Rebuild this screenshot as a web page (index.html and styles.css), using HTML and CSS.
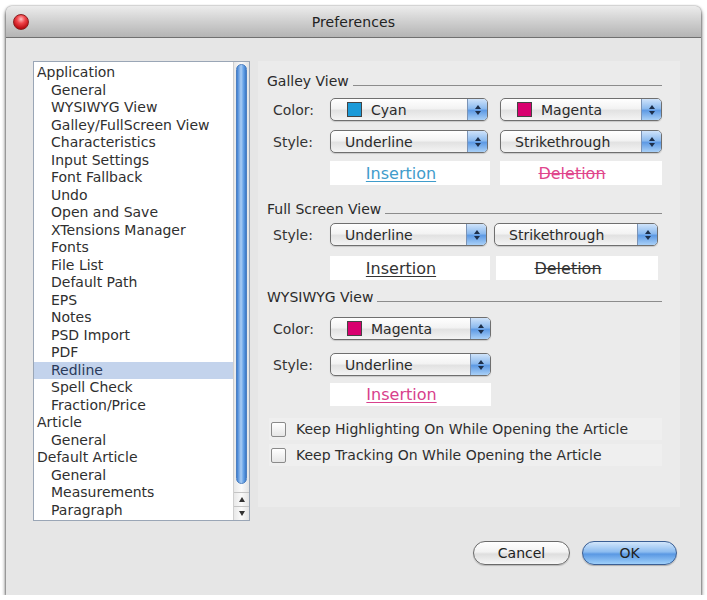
FILE: index.html
```html
<!DOCTYPE html>
<html>
<head>
<meta charset="utf-8">
<title>Preferences</title>
<link rel="stylesheet" href="styles.css">
</head>
<body>
<div class="window">
  <div class="titlebar">
    <span class="close"></span>
    <span class="title">Preferences</span>
  </div>
  <div class="content">
    <div class="listbox">
      <div class="list">
        <div class="item top">Application</div>
        <div class="item">General</div>
        <div class="item">WYSIWYG View</div>
        <div class="item">Galley/FullScreen View</div>
        <div class="item">Characteristics</div>
        <div class="item">Input Settings</div>
        <div class="item">Font Fallback</div>
        <div class="item">Undo</div>
        <div class="item">Open and Save</div>
        <div class="item">XTensions Manager</div>
        <div class="item">Fonts</div>
        <div class="item">File List</div>
        <div class="item">Default Path</div>
        <div class="item">EPS</div>
        <div class="item">Notes</div>
        <div class="item">PSD Import</div>
        <div class="item">PDF</div>
        <div class="item selected">Redline</div>
        <div class="item">Spell Check</div>
        <div class="item">Fraction/Price</div>
        <div class="item top">Article</div>
        <div class="item">General</div>
        <div class="item top">Default Article</div>
        <div class="item">General</div>
        <div class="item">Measurements</div>
        <div class="item">Paragraph</div>
      </div>
      <div class="scrollbar">
        <div class="track"><div class="thumb"></div></div>
        <div class="arrow up"><span></span></div>
        <div class="arrow down"><span></span></div>
      </div>
    </div>
    <div class="panel">
      <div class="section-head"><span>Galley View</span><span class="rule"></span></div>
      <div class="row r-first">
        <span class="label">Color:</span>
        <div class="popup w158"><span class="swatch cyan"></span><span class="ptext">Cyan</span><span class="stepper"><i class="up"></i><i class="dn"></i></span></div>
        <div class="popup w162 ml12"><span class="swatch magenta"></span><span class="ptext">Magenta</span><span class="stepper"><i class="up"></i><i class="dn"></i></span></div>
      </div>
      <div class="row r-second">
        <span class="label">Style:</span>
        <div class="popup w158"><span class="ptext">Underline</span><span class="stepper"><i class="up"></i><i class="dn"></i></span></div>
        <div class="popup w162 ml12"><span class="ptext">Strikethrough</span><span class="stepper"><i class="up"></i><i class="dn"></i></span></div>
      </div>
      <div class="row r-preview">
        <span class="label"></span>
        <div class="preview w160"><span class="ins cyan-t">Insertion</span></div>
        <div class="preview w162 ml10"><span class="del magenta-t">Deletion</span></div>
      </div>

      <div class="section-head sh2"><span>Full Screen View</span><span class="rule"></span></div>
      <div class="row r-fs">
        <span class="label">Style:</span>
        <div class="popup w157"><span class="ptext">Underline</span><span class="stepper"><i class="up"></i><i class="dn"></i></span></div>
        <div class="popup w164 ml7"><span class="ptext">Strikethrough</span><span class="stepper"><i class="up"></i><i class="dn"></i></span></div>
      </div>
      <div class="row r-fsprev">
        <span class="label"></span>
        <div class="preview w160"><span class="ins">Insertion</span></div>
        <div class="preview w162 ml6"><span class="del">Deletion</span></div>
      </div>

      <div class="section-head sh3"><span>WYSIWYG View</span><span class="rule"></span></div>
      <div class="row r-wc">
        <span class="label">Color:</span>
        <div class="popup w161"><span class="swatch magenta"></span><span class="ptext">Magenta</span><span class="stepper"><i class="up"></i><i class="dn"></i></span></div>
      </div>
      <div class="row r-ws">
        <span class="label">Style:</span>
        <div class="popup w161"><span class="ptext">Underline</span><span class="stepper"><i class="up"></i><i class="dn"></i></span></div>
      </div>
      <div class="row r-wprev">
        <span class="label"></span>
        <div class="preview w161 h23"><span class="ins pink-t">Insertion</span></div>
      </div>

      <div class="check c1"><span class="box"></span><span>Keep Highlighting On While Opening the Article</span></div>
      <div class="check c2"><span class="box"></span><span>Keep Tracking On While Opening the Article</span></div>
    </div>
  </div>
  <div class="buttons">
    <div class="btn cancel">Cancel</div>
    <div class="btn ok">OK</div>
  </div>
</div>
</body>
</html>
```

FILE: styles.css
```css
html, body {
  margin: 0;
  padding: 0;
  background: #ffffff;
}
body {
  font-family: "DejaVu Sans", "Liberation Sans", sans-serif;
  font-size: 14px;
  color: #2e2e2e;
}
.window {
  margin: 6px 0 0 6px;
  width: 695px;
  height: 589px;
  background: #e6e6e6;
  border-radius: 6px 6px 0 0;
  box-shadow: 0 3px 4px rgba(0,0,0,0.75), 0 0 2px rgba(0,0,0,0.5);
  display: flex;
  flex-direction: column;
  overflow: hidden;
}
.titlebar {
  height: 31px;
  flex: none;
  border-bottom: 1px solid #707070;
  background: linear-gradient(#ececec, #d2d2d2 45%, #b4b4b4);
  border-radius: 6px 6px 0 0;
  display: flex;
  align-items: center;
  justify-content: center;
  position: relative;
}
.close {
  position: absolute;
  left: 7px;
  top: 8px;
  width: 14px;
  height: 14px;
  border-radius: 50%;
  background: radial-gradient(circle at 50% 30%, #ffc0c0 0, #f0444a 35%, #b5060c 80%);
  border: 1px solid #8a2020;
}
.title {
  font-size: 14px;
  color: #222;
  letter-spacing: 0.1px;
}
.content {
  display: flex;
  padding: 23px 0 0 27px;
  flex: none;
}
.listbox {
  width: 215px;
  height: 458px;
  border: 1px solid #9aa6b6;
  background: #ffffff;
  display: flex;
  flex: none;
}
.list {
  flex: 1;
  padding-top: 2px;
  overflow: hidden;
}
.item {
  height: 17.5px;
  line-height: 17.5px;
  padding-left: 17px;
  white-space: nowrap;
  color: #2f2f2f;
}
.item.top {
  padding-left: 3px;
}
.item.selected {
  background: #c3d3ec;
  color: #2a3a5a;
}
.scrollbar {
  width: 15px;
  flex: none;
  display: flex;
  flex-direction: column;
  background: linear-gradient(90deg, #e8e8e8, #fafafa 50%, #e4e4e4);
  border-left: 1px solid #cfcfcf;
}
.track {
  flex: 1;
  padding: 2px 2px 8px 2px;
}
.thumb {
  height: 100%;
  border-radius: 6px;
  background: linear-gradient(90deg, #3e7fd2, #a9cdf5 45%, #6aa5e8 70%, #3a78c8);
  border: 1px solid #4c7fc0;
  box-sizing: border-box;
}
.arrow {
  height: 13px;
  border-top: 1px solid #c4c4c4;
  display: flex;
  align-items: center;
  justify-content: center;
}
.arrow span {
  width: 0;
  height: 0;
  border-left: 3px solid transparent;
  border-right: 3px solid transparent;
}
.arrow.up span { border-bottom: 5px solid #333; }
.arrow.down span { border-top: 5px solid #333; }

.panel {
  margin-left: 8px;
  width: 422px;
  height: 446px;
  box-sizing: border-box;
  padding: 12px 18px 0 9px;
  background: #ebebeb;
}
.section-head {
  display: flex;
  align-items: flex-end;
  height: 17px;
  line-height: 17px;
  color: #2a2a2a;
}
.section-head .rule {
  flex: 1;
  border-bottom: 1px solid #8c8c8c;
  margin: 0 0 4px 4px;
}
.sh2 { margin-top: 16px; }
.sh3 { margin-top: 9px; }
.row {
  display: flex;
  align-items: center;
}
.r-first { margin-top: 8px; }
.r-second { margin-top: 9px; }
.r-preview { margin-top: 8px; }
.r-fs { margin-top: 5px; }
.r-fsprev { margin-top: 10px; }
.r-wc { margin-top: 11px; }
.r-ws { margin-top: 13px; }
.r-wprev { margin-top: 7px; }
.label {
  width: 63px;
  flex: none;
  padding-left: 6px;
  box-sizing: border-box;
  color: #333;
}
.popup {
  height: 23px;
  box-sizing: border-box;
  border: 1px solid #6f6f6f;
  border-radius: 5px;
  background: linear-gradient(#ffffff, #f3f3f3 45%, #e2e2e2 55%, #f4f4f4);
  box-shadow: 0 1px 1px rgba(0,0,0,0.15);
  display: flex;
  align-items: center;
  position: relative;
  padding-left: 14px;
  flex: none;
}
.ptext { color: #2a2a2a; }
.swatch {
  width: 13px;
  height: 13px;
  border: 1px solid #444;
  margin: 0 9px 0 2px;
  flex: none;
}
.swatch.cyan { background: #1b9ad8; }
.swatch.magenta { background: #d8006f; }
.stepper {
  position: absolute;
  right: 0;
  top: 0;
  bottom: 0;
  width: 19px;
  border-left: 1px solid #7b93b5;
  border-radius: 0 4px 4px 0;
  background: linear-gradient(#cfe3fa, #8dbbef 45%, #5e9ae4 55%, #a9d0f7);
  display: flex;
  flex-direction: column;
  align-items: center;
  justify-content: center;
  gap: 2px;
}
.stepper i {
  width: 0;
  height: 0;
  border-left: 3px solid transparent;
  border-right: 3px solid transparent;
}
.stepper i.up { border-bottom: 4px solid #1d2f4a; }
.stepper i.dn { border-top: 4px solid #1d2f4a; }

.w157 { width: 157px; }
.w158 { width: 158px; }
.w160 { width: 160px; }
.w161 { width: 161px; }
.w162 { width: 162px; }
.w164 { width: 164px; }
.ml6 { margin-left: 6px; }
.ml7 { margin-left: 7px; }
.ml10 { margin-left: 10px; }
.ml12 { margin-left: 12px; }

.preview {
  height: 24px;
  box-sizing: border-box;
  padding-right: 18px;
  background: #ffffff;
  display: flex;
  align-items: center;
  justify-content: center;
  font-size: 16px;
  flex: none;
  color: #333;
}
.preview.h23 { height: 23px; }
.ins { text-decoration: underline; text-underline-offset: 2px; }
.del { text-decoration: line-through; }
.cyan-t { color: #3f9ccb; }
.magenta-t { color: #e0468c; }
.pink-t { color: #d8408c; }

.check {
  display: flex;
  align-items: center;
  height: 22px;
  margin-left: 2px;
  background: #efefef;
  color: #2e2e2e;
}
.c1 { margin-top: 12px; }
.c2 { margin-top: 4px; }
.check .box {
  width: 13px;
  height: 13px;
  border: 1px solid #8a8a8a;
  border-radius: 2px;
  background: linear-gradient(#ffffff, #e6e6e6);
  margin: 0 10px 0 2px;
  flex: none;
}
.buttons {
  display: flex;
  justify-content: flex-end;
  gap: 12px;
  padding: 20px 24px 0 0;
}
.btn {
  height: 24px;
  box-sizing: border-box;
  border-radius: 12px;
  display: flex;
  align-items: center;
  justify-content: center;
  font-size: 14px;
  color: #222;
}
.btn.cancel {
  width: 97px;
  border: 1px solid #6a6a6a;
  background: linear-gradient(#ffffff, #f2f2f2 45%, #dedede 55%, #f6f6f6);
  box-shadow: 0 1px 1px rgba(0,0,0,0.2);
}
.btn.ok {
  width: 95px;
  border: 1px solid #3b5f94;
  background: linear-gradient(#d2e6fb, #8cbcf0 45%, #5a98e3 55%, #9fd0fa);
  box-shadow: 0 1px 1px rgba(0,0,0,0.25);
}
```
